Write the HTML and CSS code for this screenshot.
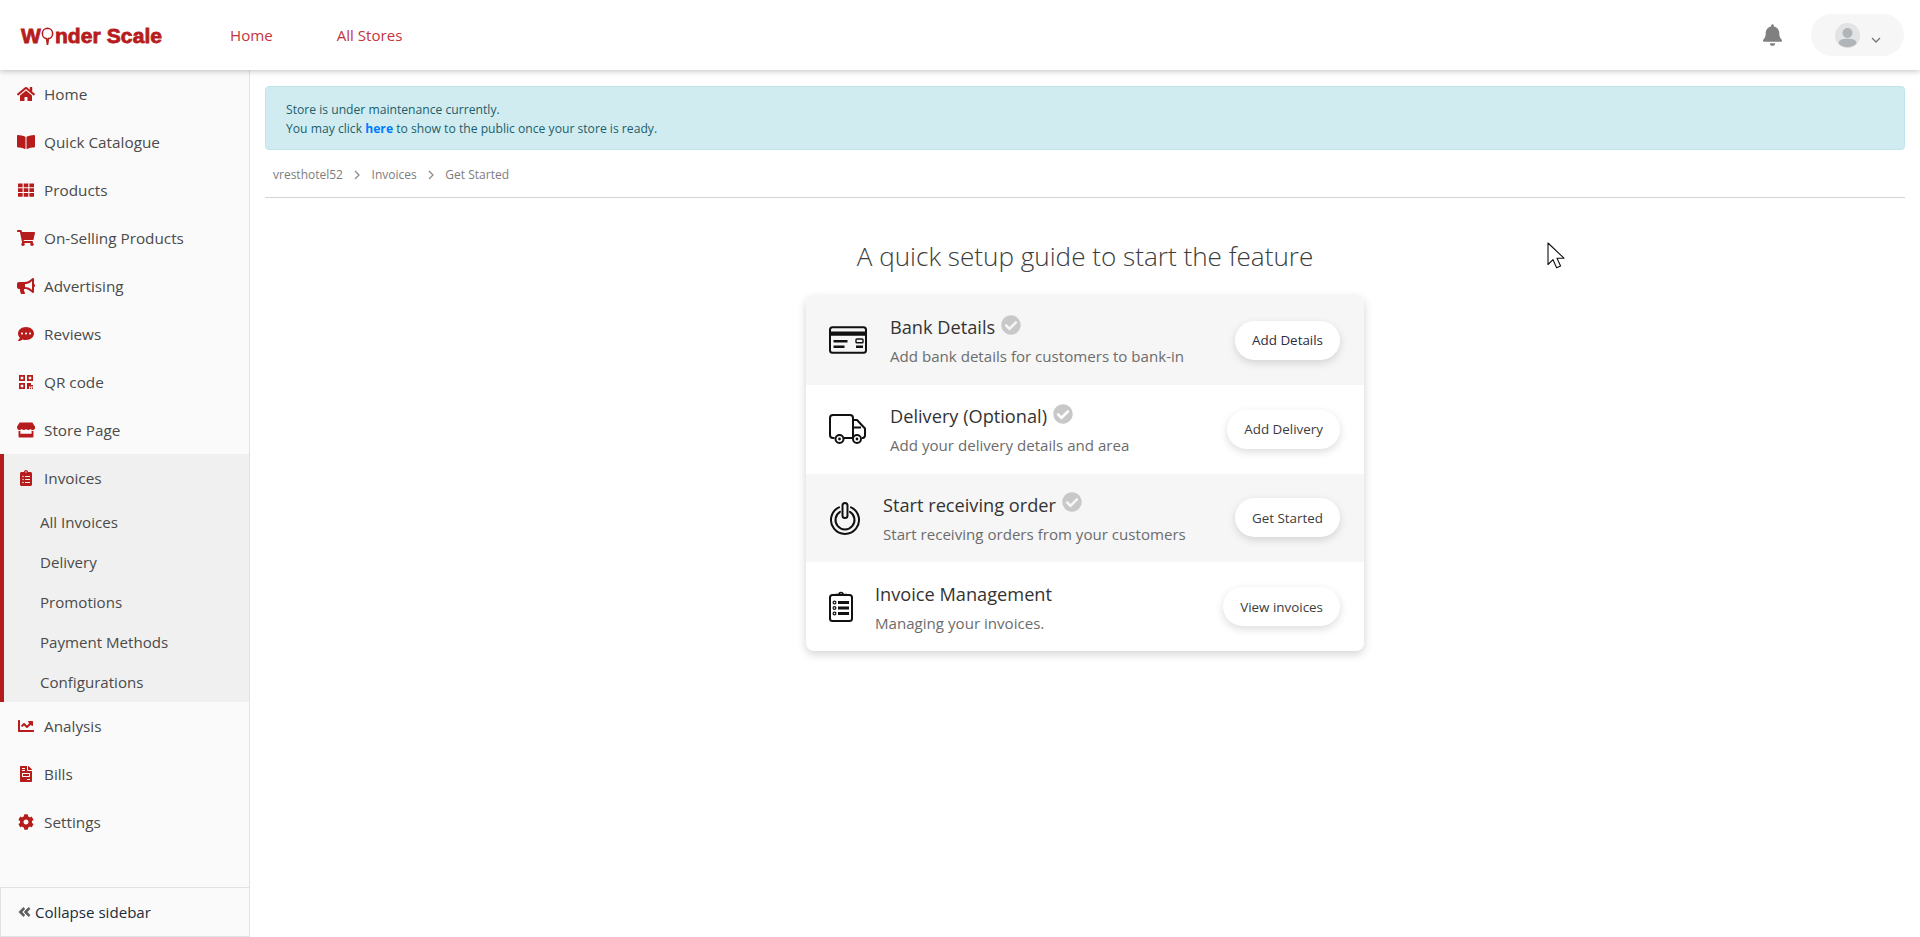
FILE: index.html
```html
<!DOCTYPE html>
<html lang="en">
<head>
<meta charset="utf-8">
<title>Wonder Scale</title>
<link rel="stylesheet" href="styles.css">
</head>
<body>
<header class="topbar">
  <div class="logo"><span>W</span><svg class="pin" viewBox="0 0 14 20"><path d="M7 1.200a5.600 5.600 0 0 1 1 11.100L7 19l-1-6.700A5.600 5.600 0 0 1 7 1.200z" fill="none" stroke="#b71c1c" stroke-width="1.700"/></svg><span>nder Scale</span></div>
  <nav class="topnav"><a>Home</a><a>All Stores</a></nav>
  <div class="top-right">
    <svg class="bell" viewBox="0 0 448 512"><path d="M224 512c35.32 0 63.97-28.65 63.97-64H160.03c0 35.35 28.65 64 63.97 64zm215.39-149.71c-19.32-20.76-55.47-51.99-55.47-154.29 0-77.7-54.48-139.9-127.94-155.16V32c0-17.67-14.32-32-31.98-32s-31.98 14.33-31.98 32v20.84C118.56 68.1 64.08 130.3 64.08 208c0 102.3-36.15 133.53-55.47 154.29-6 6.45-8.66 14.16-8.61 21.71.11 16.4 12.98 32 32.1 32h383.8c19.12 0 32-15.6 32.1-32 .05-7.55-2.61-15.27-8.61-21.71z"/></svg>
    <div class="user-pill">
      <svg class="avatar" viewBox="0 0 25 25"><circle cx="12.500" cy="12.500" r="12.500" fill="#e2e3e4"/><circle cx="12.500" cy="10" r="5" fill="#b0b5b9"/><path d="M3.500 20.500c0-3.400 3.500-4.700 9-4.700s9 1.300 9 4.700a12.500 12.500 0 0 1-18 0z" fill="#b0b5b9"/></svg>
      <svg class="chev" viewBox="0 0 10 6"><path d="M1 1l4 4 4-4" fill="none" stroke="#777" stroke-width="1.300"/></svg>
    </div>
  </div>
</header>
<div class="shell">
  <aside class="sidebar">
    <ul class="menu">
      <li class="item"><svg class="ic" viewBox="0 0 576 512"><path d="M280.37 148.26L96 300.11V464a16 16 0 0 0 16 16l112.06-.29a16 16 0 0 0 15.92-16V368a16 16 0 0 1 16-16h64a16 16 0 0 1 16 16v95.64a16 16 0 0 0 16 16.05L464 480a16 16 0 0 0 16-16V300L295.67 148.26a12.19 12.19 0 0 0-15.3 0zM571.6 251.47L488 182.56V44.05a12 12 0 0 0-12-12h-56a12 12 0 0 0-12 12v72.61L318.47 43a48 48 0 0 0-61 0L4.34 251.47a12 12 0 0 0-1.6 16.9l25.5 31A12 12 0 0 0 45.15 301l235.22-193.74a12.19 12.19 0 0 1 15.3 0L530.9 301a12 12 0 0 0 16.9-1.6l25.5-31a12 12 0 0 0-1.7-16.93z"/></svg>Home</li>
      <li class="item"><svg class="ic" viewBox="0 0 576 512"><path d="M542.22 32.05c-54.8 3.11-163.72 14.43-230.96 55.59-4.64 2.84-7.27 7.89-7.27 13.17v363.87c0 11.55 12.63 18.85 23.28 13.49 69.18-34.82 169.23-44.32 218.7-46.92 16.89-.89 30.02-14.43 30.02-30.66V62.75c.01-17.71-15.35-31.74-33.77-30.7zM264.73 87.64C197.5 46.48 88.58 35.17 33.78 32.05 15.36 31.01 0 45.04 0 62.75V400.6c0 16.24 13.13 29.78 30.02 30.66 49.49 2.6 149.59 12.11 218.77 46.95 10.62 5.35 23.21-1.94 23.21-13.46V100.63c0-5.29-2.62-10.14-7.27-12.99z"/></svg>Quick Catalogue</li>
      <li class="item"><svg class="ic" viewBox="0 0 16 16"><path d="M0 1.500h4.600v3.800H0zM5.700 1.500h4.600v3.800H5.700zM11.400 1.500H16v3.800h-4.600zM0 6.200h4.600V10H0zM5.700 6.200h4.600V10H5.700zM11.400 6.200H16V10h-4.600zM0 10.900h4.600v3.800H0zM5.700 10.900h4.600v3.800H5.700zM11.400 10.900H16v3.800h-4.600z"/></svg>Products</li>
      <li class="item"><svg class="ic" viewBox="0 0 576 512"><path d="M528.12 301.319l47.273-208C578.806 78.301 567.391 64 551.99 64H159.208l-9.166-44.81C147.758 8.021 137.93 0 126.529 0H24C10.745 0 0 10.745 0 24v16c0 13.255 10.745 24 24 24h69.883l70.248 343.435C147.325 417.1 136 435.222 136 456c0 30.928 25.072 56 56 56s56-25.072 56-56c0-15.674-6.447-29.835-16.824-40h209.647C430.447 426.165 424 440.326 424 456c0 30.928 25.072 56 56 56s56-25.072 56-56c0-22.172-12.888-41.332-31.579-50.405l5.517-24.276c3.413-15.018-8.002-29.319-23.403-29.319H218.117l-6.545-32h293.145c11.206 0 20.92-7.754 23.403-18.681z"/></svg>On-Selling Products</li>
      <li class="item"><svg class="ic" viewBox="0 0 576 512"><path d="M576 240c0-23.63-12.95-44.04-32-55.12V32.01C544 23.26 537.02 0 512 0c-7.12 0-14.19 2.38-19.98 7.02l-85.03 68.03C364.28 109.19 310.66 128 256 128H64c-35.35 0-64 28.65-64 64v96c0 35.35 28.65 64 64 64h33.7c-1.39 10.48-2.18 21.14-2.18 32 0 39.77 9.26 77.35 25.56 110.94 5.19 10.69 16.52 17.06 28.4 17.06h74.28c26.05 0 41.69-29.84 25.9-50.56-16.4-21.52-26.15-48.36-26.15-77.44 0-11.11 1.62-21.79 4.41-32H256c54.66 0 108.28 18.81 150.98 52.95l85.03 68.03a32.023 32.023 0 0 0 19.98 7.02c24.92 0 32-22.78 32-32V295.13C563.05 284.04 576 263.63 576 240zm-96 141.42l-33.05-26.44C392.95 311.78 325.12 288 256 288v-96c69.12 0 136.95-23.78 190.95-66.98L480 98.58v282.84z"/></svg>Advertising</li>
      <li class="item"><svg class="ic" viewBox="0 0 512 512"><path d="M256 32C114.6 32 0 125.1 0 240c0 49.6 21.4 95 57 130.7C44.5 421.1 2.7 466 2.2 466.5c-2.2 2.3-2.8 5.7-1.5 8.7S4.8 480 8 480c66.3 0 116-31.8 140.6-51.4 32.7 12.3 69 19.4 107.4 19.4 141.4 0 256-93.1 256-208S397.4 32 256 32zM128 272c-17.7 0-32-14.3-32-32s14.3-32 32-32 32 14.3 32 32-14.3 32-32 32zm128 0c-17.7 0-32-14.3-32-32s14.3-32 32-32 32 14.3 32 32-14.3 32-32 32zm128 0c-17.7 0-32-14.3-32-32s14.3-32 32-32 32 14.3 32 32-14.3 32-32 32z"/></svg>Reviews</li>
      <li class="item"><svg class="ic" viewBox="0 0 16 16"><path fill-rule="evenodd" d="M1 1h6v6H1zM2.700 2.700v2.600h2.600V2.700zM9 1h6v6H9zM10.700 2.700v2.600h2.600V2.700zM1 9h6v6H1zM2.700 10.700v2.600h2.600v-2.600zM9 9h4v2h2v1.500h-4V15H9zM12 13.500h1.200V15H12zM14 13.500h1V15h-1z"/></svg>QR code</li>
      <li class="item"><svg class="ic" viewBox="0 0 616 512"><path d="M602 118.6L537.1 15C531.3 5.7 521 0 510 0H106C95 0 84.7 5.7 78.9 15L14 118.6c-33.9 54.1-3.9 129.3 59.4 137.9 4.6.6 9.2.9 13.7.9 29.9 0 56.4-13.1 74.7-33.5 18.3 20.4 44.9 33.5 74.7 33.5 29.9 0 56.4-13.1 74.7-33.5 18.3 20.4 44.9 33.5 74.7 33.5 29.9 0 56.4-13.1 74.7-33.5 18.4 20.4 44.9 33.5 74.7 33.5 4.6 0 9.1-.3 13.7-.9 63.5-8.5 93.6-83.7 59.6-137.9zM529.5 288c-10 0-19.9-1.5-29.5-3.8V384H116v-99.8c-9.6 2.2-19.5 3.8-29.5 3.8-6 0-12.1-.4-18-1.2-5.6-.8-11.1-2.1-16.4-3.6V480c0 17.7 14.3 32 32 32h448c17.7 0 32-14.3 32-32V283.2c-5.4 1.6-10.8 2.9-16.4 3.6-6.1.8-12.1 1.2-18.2 1.2z"/></svg>Store Page</li>
      <li class="group">
        <div class="item"><svg class="ic" viewBox="0 0 384 512"><path d="M336 64h-80c0-35.3-28.7-64-64-64s-64 28.7-64 64H48C21.5 64 0 85.5 0 112v352c0 26.5 21.5 48 48 48h288c26.5 0 48-21.5 48-48V112c0-26.5-21.5-48-48-48zM96 424c-13.3 0-24-10.7-24-24s10.7-24 24-24 24 10.7 24 24-10.7 24-24 24zm0-96c-13.3 0-24-10.7-24-24s10.7-24 24-24 24 10.7 24 24-10.7 24-24 24zm0-96c-13.3 0-24-10.7-24-24s10.7-24 24-24 24 10.7 24 24-10.7 24-24 24zm96-192c13.3 0 24 10.7 24 24s-10.7 24-24 24-24-10.7-24-24 10.7-24 24-24zm128 368c0 4.4-3.6 8-8 8H168c-4.4 0-8-3.6-8-8v-16c0-4.4 3.6-8 8-8h144c4.4 0 8 3.6 8 8v16zm0-96c0 4.4-3.6 8-8 8H168c-4.4 0-8-3.6-8-8v-16c0-4.4 3.6-8 8-8h144c4.4 0 8 3.6 8 8v16zm0-96c0 4.4-3.6 8-8 8H168c-4.4 0-8-3.6-8-8v-16c0-4.4 3.6-8 8-8h144c4.4 0 8 3.6 8 8v16z"/></svg>Invoices</div>
        <ul class="submenu">
          <li>All Invoices</li>
          <li>Delivery</li>
          <li>Promotions</li>
          <li>Payment Methods</li>
          <li>Configurations</li>
        </ul>
      </li>
      <li class="item"><svg class="ic" viewBox="0 0 512 512"><path d="M496 384H64V80c0-8.84-7.16-16-16-16H16C7.16 64 0 71.16 0 80v336c0 17.67 14.33 32 32 32h464c8.84 0 16-7.16 16-16v-32c0-8.84-7.16-16-16-16zM464 96H345.94c-21.38 0-32.09 25.85-16.97 40.97l32.4 32.4L288 242.75l-73.37-73.37c-12.5-12.5-32.76-12.5-45.25 0l-68.69 68.69c-6.25 6.25-6.25 16.38 0 22.63l22.62 22.62c6.25 6.25 16.38 6.25 22.63 0L192 237.25l73.37 73.37c12.5 12.5 32.76 12.5 45.25 0l96-96 32.4 32.4c15.12 15.12 40.97 4.41 40.97-16.97V112c.01-8.84-7.15-16-15.99-16z"/></svg>Analysis</li>
      <li class="item"><svg class="ic" viewBox="0 0 384 512"><path d="M288 256H96v64h192v-64zm89-151L279.1 7c-4.5-4.5-10.6-7-17-7H256v128h128v-6.1c0-6.3-2.5-12.4-7-16.9zm-153 31V0H24C10.7 0 0 10.7 0 24v464c0 13.3 10.7 24 24 24h336c13.3 0 24-10.7 24-24V160H248c-13.2 0-24-10.8-24-24zM64 72c0-4.42 3.58-8 8-8h80c4.42 0 8 3.58 8 8v16c0 4.42-3.58 8-8 8H72c-4.42 0-8-3.58-8-8V72zm0 64c0-4.42 3.58-8 8-8h80c4.42 0 8 3.58 8 8v16c0 4.42-3.58 8-8 8H72c-4.42 0-8-3.58-8-8v-16zm256 304c0 4.42-3.58 8-8 8h-80c-4.42 0-8-3.58-8-8v-16c0-4.42 3.58-8 8-8h80c4.42 0 8 3.58 8 8v16zm0-200v96c0 8.84-7.16 16-16 16H80c-8.84 0-16-7.16-16-16v-96c0-8.84 7.16-16 16-16h224c8.84 0 16 7.16 16 16z"/></svg>Bills</li>
      <li class="item"><svg class="ic" viewBox="0 0 512 512"><path d="M487.4 315.7l-42.6-24.6c4.3-23.2 4.3-47 0-70.2l42.6-24.6c4.9-2.8 7.1-8.6 5.5-14-11.1-35.6-30-67.8-54.7-94.6-3.8-4.1-10-5.1-14.8-2.3L380.8 110c-17.9-15.4-38.5-27.3-60.8-35.1V25.8c0-5.6-3.9-10.5-9.4-11.7-36.7-8.2-74.3-7.8-109.2 0-5.5 1.2-9.4 6.1-9.4 11.7V75c-22.2 7.9-42.8 19.8-60.8 35.1L88.7 85.5c-4.9-2.8-11-1.9-14.8 2.3-24.7 26.7-43.6 58.9-54.7 94.6-1.7 5.4.6 11.2 5.5 14L67.3 221c-4.3 23.2-4.3 47 0 70.2l-42.6 24.6c-4.9 2.8-7.1 8.6-5.5 14 11.1 35.6 30 67.8 54.7 94.6 3.8 4.1 10 5.1 14.8 2.3l42.6-24.6c17.9 15.4 38.5 27.3 60.8 35.1v49.2c0 5.6 3.9 10.5 9.4 11.7 36.7 8.2 74.3 7.8 109.2 0 5.5-1.2 9.4-6.1 9.4-11.7v-49.2c22.2-7.9 42.8-19.8 60.8-35.1l42.6 24.6c4.9 2.8 11 1.9 14.8-2.3 24.7-26.7 43.6-58.9 54.7-94.6 1.5-5.5-.7-11.3-5.6-14.1zM256 336c-44.1 0-80-35.9-80-80s35.9-80 80-80 80 35.9 80 80-35.9 80-80 80z"/></svg>Settings</li>
    </ul>
    <div class="collapse"><svg class="dbl" viewBox="0 0 448 512"><path d="M223.7 239l136-136c9.4-9.4 24.6-9.4 33.9 0l22.6 22.6c9.4 9.4 9.4 24.6 0 33.9L319.9 256l96.4 96.4c9.4 9.4 9.4 24.6 0 33.9L393.7 409c-9.4 9.4-24.6 9.4-33.9 0l-136-136c-9.5-9.4-9.5-24.6-.1-34zm-192 34l136 136c9.4 9.4 24.6 9.4 33.9 0l22.6-22.6c9.4-9.4 9.4-24.6 0-33.9L127.9 256l96.4-96.4c9.4-9.4 9.4-24.6 0-33.9L201.7 103c-9.4-9.4-24.6-9.4-33.9 0l-136 136c-9.5 9.4-9.5 24.6-.1 34z"/></svg>Collapse sidebar</div>
  </aside>
  <main class="content">
    <div class="alert">Store is under maintenance currently.<br>You may click <a>here</a> to show to the public once your store is ready.</div>
    <div class="crumbs">
      <span>vresthotel52</span>
      <svg class="sep" viewBox="0 0 6 10"><path d="M1 1l4 4-4 4" fill="none" stroke="#888" stroke-width="1.200"/></svg>
      <span>Invoices</span>
      <svg class="sep" viewBox="0 0 6 10"><path d="M1 1l4 4-4 4" fill="none" stroke="#888" stroke-width="1.200"/></svg>
      <span>Get Started</span>
    </div>
    <h1 class="guide-title">A quick setup guide to start the feature</h1>
    <section class="card">
      <div class="row shaded">
        <svg class="row-ic w38" viewBox="0 0 38 28"><rect x="1" y="1.200" width="36" height="25.600" rx="2.500" fill="none" stroke="#111" stroke-width="2"/><path d="M1 5.500h36v4.300H1z" fill="#111"/><path d="M4.500 14h14v2.400h-14zM4.500 19.500h11v2.400h-11zM27 19.500h7v2.400h-7z" fill="#111"/><rect x="27" y="13" width="7" height="3.800" rx=".8" fill="none" stroke="#111" stroke-width="1.400"/></svg>
        <div class="row-text"><h2>Bank Details <svg class="tick" viewBox="0 0 512 512"><path d="M504 256c0 136.967-111.033 248-248 248S8 392.967 8 256 119.033 8 256 8s248 111.033 248 248zM227.314 387.314l184-184c6.248-6.248 6.248-16.379 0-22.627l-22.627-22.627c-6.248-6.249-16.379-6.249-22.628 0L216 308.118l-70.059-70.059c-6.248-6.248-16.379-6.248-22.628 0l-22.627 22.627c-6.248 6.248-6.248 16.379 0 22.627l104 104c6.249 6.249 16.379 6.249 22.628.001z"/></svg></h2><p>Add bank details for customers to bank-in</p></div>
        <button class="btn dark">Add Details</button>
      </div>
      <div class="row">
        <svg class="row-ic truck" viewBox="0 0 38 30"><g fill="none" stroke="#111" stroke-width="2" stroke-linejoin="round"><path d="M5.500 24H4a3 3 0 0 1-3-3V4a3 3 0 0 1 3-3h17a3 3 0 0 1 3 3v20H15"/><path d="M24 6h4l8 8.500V21a3 3 0 0 1-2 3h-1"/><path d="M24 7v6.500h8"/><circle cx="10.500" cy="25" r="4"/><circle cx="28" cy="25" r="4"/><path d="M15 24h9"/></g><circle cx="10.500" cy="25" r="1.400" fill="#111"/><circle cx="28" cy="25" r="1.400" fill="#111"/></svg>
        <div class="row-text"><h2>Delivery (Optional) <svg class="tick" viewBox="0 0 512 512"><path d="M504 256c0 136.967-111.033 248-248 248S8 392.967 8 256 119.033 8 256 8s248 111.033 248 248zM227.314 387.314l184-184c6.248-6.248 6.248-16.379 0-22.627l-22.627-22.627c-6.248-6.249-16.379-6.249-22.628 0L216 308.118l-70.059-70.059c-6.248-6.248-16.379-6.248-22.628 0l-22.627 22.627c-6.248 6.248-6.248 16.379 0 22.627l104 104c6.249 6.249 16.379 6.249 22.628.001z"/></svg></h2><p>Add your delivery details and area</p></div>
        <button class="btn">Add Delivery</button>
      </div>
      <div class="row shaded">
        <svg class="row-ic w32" viewBox="0 0 32 34"><g fill="none" stroke="#111" stroke-width="2" stroke-linecap="round"><path d="M10 6.300a14 14 0 1 0 12 0"/><path d="M11 10.900a9.500 9.500 0 1 0 10 0"/><rect x="13.500" y="2" width="5" height="15" rx="2.500"/></g></svg>
        <div class="row-text"><h2>Start receiving order <svg class="tick" viewBox="0 0 512 512"><path d="M504 256c0 136.967-111.033 248-248 248S8 392.967 8 256 119.033 8 256 8s248 111.033 248 248zM227.314 387.314l184-184c6.248-6.248 6.248-16.379 0-22.627l-22.627-22.627c-6.248-6.249-16.379-6.249-22.628 0L216 308.118l-70.059-70.059c-6.248-6.248-16.379-6.248-22.628 0l-22.627 22.627c-6.248 6.248-6.248 16.379 0 22.627l104 104c6.249 6.249 16.379 6.249 22.628.001z"/></svg></h2><p>Start receiving orders from your customers</p></div>
        <button class="btn">Get Started</button>
      </div>
      <div class="row">
        <svg class="row-ic w24" viewBox="0 0 24 31"><rect x="1" y="4" width="22" height="26" rx="2.500" fill="none" stroke="#111" stroke-width="2"/><path d="M7 5V3.500h3a2 2 0 0 1 4 0h3V5" fill="none" stroke="#111" stroke-width="1.600"/><circle cx="12" cy="3.500" r="1" fill="#111"/><g fill="#111"><rect x="9" y="10" width="11" height="3"/><rect x="9" y="15.500" width="11" height="3"/><rect x="9" y="21" width="11" height="3"/></g><g fill="none" stroke="#111" stroke-width="1.200"><circle cx="5.500" cy="11.500" r="1.400"/><circle cx="5.500" cy="17" r="1.400"/><circle cx="5.500" cy="22.500" r="1.400"/></g></svg>
        <div class="row-text"><h2>Invoice Management</h2><p>Managing your invoices.</p></div>
        <button class="btn">View invoices</button>
      </div>
    </section>
  </main>
</div>
<svg class="cursor" viewBox="0 0 19 28"><path d="M1 1v21.500l5-4.800 3.600 8 4-1.800-3.600-7.700h7z" fill="#fff" stroke="#111" stroke-width="1.100" stroke-linejoin="round"/></svg>
</body>
</html>
```
FILE: styles.css
```css
* { box-sizing: border-box; }
html, body { margin: 0; height: 937px; overflow: hidden; background: #fff; }
body { font-family: "Open Sans", "Noto Sans", sans-serif; color: #3c3c3c; display: flex; flex-direction: column; }
ul { list-style: none; margin: 0; padding: 0; }

.topbar { height: 70px; flex: none; display: flex; align-items: center; padding: 0 16px 0 21px; background: #fff; box-shadow: 0 1px 6px rgba(0,0,0,.25); position: relative; z-index: 2; }
.logo { display: flex; align-items: center; width: 209px; font-family: "Liberation Sans", sans-serif; font-weight: 700; font-size: 21px; line-height: 1; color: #b71c1c; letter-spacing: .1px; -webkit-text-stroke: .8px #b71c1c; }
.pin { width: 13px; height: 19px; margin: 3px 1px 0 0; }
.topnav { display: flex; gap: 64px; font-size: 15.100px; color: #c5343a; }
.top-right { margin-left: auto; display: flex; align-items: center; gap: 29px; }
.bell { width: 19px; height: 22px; fill: #808080; margin-top: -1px; }
.user-pill { width: 93px; height: 42px; border-radius: 21px; background: #f6f6f6; display: flex; align-items: center; padding-left: 24px; gap: 11px; }
.avatar { width: 25px; height: 25px; }
.chev { width: 10px; height: 6px; margin-top: 10px; }

.shell { flex: 1; display: flex; min-height: 0; }
.sidebar { width: 250px; flex: none; background: #fafafa; border-right: 1px solid #e2e2e2; display: flex; flex-direction: column; }
.menu { flex: 1; }
.item { height: 48px; display: flex; align-items: center; padding-left: 17px; font-size: 15.300px; color: #4a4a4a; }
.ic { width: 18px; height: 16px; fill: #b71c1c; margin-right: 9px; flex: none; }
.group { background: #f0f0f0; border-left: 4px solid #b71c1c; }
.group .item { padding-left: 13px; }
.submenu li { height: 40px; display: flex; align-items: center; padding-left: 36px; font-size: 15.100px; color: #4a4a4a; }
.collapse { height: 50px; border-top: 1px solid #e2e2e2; border-left: 1px solid #e2e2e2; border-bottom: 1px solid #e2e2e2; display: flex; align-items: center; padding-left: 17px; font-size: 15.100px; color: #1c2b3c; }
.dbl { width: 13px; height: 14px; fill: #5e5e5e; stroke: #5e5e5e; stroke-width: 24; margin-right: 4px; }

.content { flex: 1; padding: 16px 15px 0; min-width: 0; }
.alert { height: 64px; padding: 13px 20px; background: #d1ecf1; border: 1px solid #bee5eb; border-radius: 4px; color: #1b5f6b; font-size: 12.150px; line-height: 19px; }
.alert a { color: #007bff; font-weight: 700; }
.crumbs { height: 48px; display: flex; align-items: center; gap: 11.300px; padding: 2px 0 0 8px; font-size: 12px; color: #7d7d7d; border-bottom: 1px solid #d3d3da; }
.sep { width: 6px; height: 10px; }
.guide-title { margin: 38px 0 0; text-align: center; font-size: 26.100px; font-weight: 300; line-height: 40px; color: #3c3c3c; }
.card { width: 558px; margin: 20px auto 0; border-radius: 8px; overflow: hidden; box-shadow: 0 3px 10px rgba(0,0,0,.18); background: #fff; }
.row { height: 88.750px; display: flex; align-items: center; padding: 0 24px 0 23px; gap: 23px; }
.shaded { background: #f6f6f6; }
.row-ic { flex: none; }
.w38 { width: 38px; height: 28px; }
.truck { width: 38px; height: 30px; }
.w32 { width: 32px; height: 34px; margin-right: -1px; }
.w24 { width: 24px; height: 31px; margin-right: -1px; }
.row-text { flex: 1; min-width: 0; }
.row-text h2 { margin: 0; font-size: 18.200px; font-weight: 400; line-height: 26px; color: #333; display: flex; align-items: center; gap: 3px; }
.row-text p { margin: 6px 0 0; font-size: 15.100px; line-height: 20px; color: #6c6c6c; }
.tick { width: 20px; height: 20px; fill: #c8c8c8; margin: -5px 0 0 3px; }
.btn { height: 39px; padding: 0 17px; border: 0; border-radius: 20px; background: #fff; font: 400 13.400px "Open Sans", sans-serif; color: #3c3c3c; box-shadow: 0 3px 8px rgba(0,0,0,.14); flex: none; }
.btn.dark { color: #2c2c3c; }
.cursor { position: absolute; left: 1547px; top: 242px; width: 19px; height: 28px; z-index: 5; }
```
